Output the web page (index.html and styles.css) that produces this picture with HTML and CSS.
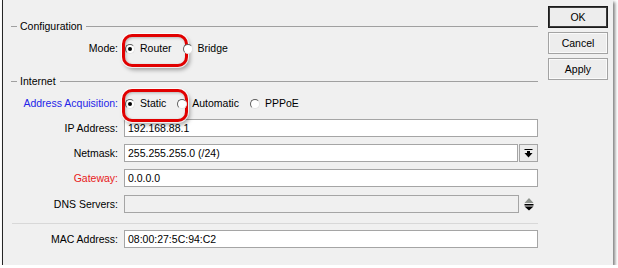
FILE: index.html
```html
<!DOCTYPE html>
<html lang="en">
<head>
  <meta charset="UTF-8" />
  <title>Quick Set</title>
  <link rel="stylesheet" href="styles.css">
</head>
<body>

  <div class="window">
    <!-- FORM -->
    <div class="form">
      <div class="group-title">Configuration</div>
      <div class="row row-mode">
        <span class="label">Mode:</span>
        <div class="options">
          <span class="option marked"><i class="radio on"></i>Router</span>
          <span class="option"><i class="radio"></i>Bridge</span>
        </div>
      </div>

      <div class="group-title group-internet">Internet</div>
      <div class="row row-acq">
        <span class="label blue">Address Acquisition:</span>
        <div class="options">
          <span class="option marked"><i class="radio on"></i>Static</span>
          <span class="option"><i class="radio"></i>Automatic</span>
          <span class="option"><i class="radio"></i>PPPoE</span>
        </div>
      </div>

      <div class="row row-field">
        <span class="label">IP Address:</span>
        <div class="field">192.168.88.1</div>
      </div>
      <div class="row row-field">
        <span class="label">Netmask:</span>
        <div class="field-wrap">
          <div class="field">255.255.255.0 (/24)</div>
          <div class="drop-btn">
            <svg width="9" height="9" viewBox="0 0 9 9"><rect x="0.5" y="0" width="8" height="1"/><rect x="3" y="2" width="3" height="2"/><path d="M0.5 4H8.5L4.5 8.5z"/></svg>
          </div>
        </div>
      </div>
      <div class="row row-field">
        <span class="label red">Gateway:</span>
        <div class="field">0.0.0.0</div>
      </div>
      <div class="row row-field row-dns">
        <span class="label">DNS Servers:</span>
        <div class="field-wrap">
          <div class="field disabled"></div>
          <div class="spin">
            <svg width="10" height="13" viewBox="0 0 10 13"><path fill="#8c918c" d="M5 0L9.5 5H0.5z"/><rect x="0.5" y="6" width="9" height="1.5"/><path d="M0.5 8.5H9.5L5 12.5z"/></svg>
          </div>
        </div>
      </div>

      <div class="separator"></div>

      <div class="row row-field row-mac">
        <span class="label">MAC Address:</span>
        <div class="field">08:00:27:5C:94:C2</div>
      </div>
    </div>

    <!-- BUTTONS -->
    <div class="actions">
      <button class="btn btn-default">OK</button>
      <button class="btn">Cancel</button>
      <button class="btn">Apply</button>
    </div>
  </div>

</body>
</html>
```

FILE: styles.css
```css
* {
  box-sizing: border-box;
}
body {
  margin: 0;
  padding: 0;
  background: #fff;
  font-family: 'Liberation Sans', Arial, sans-serif;
  font-size: 10.5px;
  color: #000;
}

.window {
  display: flex;
  width: 611px;
  height: 265px;
  margin-left: 2px;
  background: #f0f0f0;
  border-left: 1px solid #262626;
  box-shadow: 2px 2px 3px rgba(0,0,0,0.5);
}

.form {
  width: 535px;
  padding-top: 20px;
}

/* group headers */
.group-title {
  display: flex;
  align-items: center;
  height: 13px;
  line-height: 13px;
}
.group-title::before {
  content: "";
  width: 6px;
  height: 1px;
  background: #a0a0a0;
  margin: 0 3px 0 8px;
}
.group-title::after {
  content: "";
  flex: 1;
  height: 1px;
  background: #a0a0a0;
  margin-left: 4px;
}
.group-internet {
  margin-top: 18px;
}

/* rows */
.row {
  display: grid;
  grid-template-columns: 115px 1fr;
  column-gap: 6px;
  align-items: center;
  height: 18px;
}
.row-mode { margin-top: 6px; }
.row-acq { margin-top: 6px; }
.row-field { margin-top: 7px; }
.row-dns { margin-top: 8px; }
.row-mac { margin-top: 6px; }

.label {
  text-align: right;
  white-space: nowrap;
}
.blue { color: #2424e8; }
.red { color: #e82020; }

/* radio options */
.options {
  display: flex;
  align-items: center;
  padding-left: 1px;
}
.option {
  display: inline-flex;
  align-items: center;
  height: 18px;
  margin-right: 11px;
  position: relative;
}
.radio {
  width: 10px;
  height: 10px;
  margin: 2px 5px 0 0;
  border-radius: 50%;
  border: 1px solid;
  border-color: #5e5e5e #e2e2e2 #e2e2e2 #5e5e5e;
  background: #fff;
  position: relative;
}
.radio.on::after {
  content: "";
  position: absolute;
  left: 2px;
  top: 2px;
  width: 4px;
  height: 4px;
  border-radius: 50%;
  background: #000;
}

/* red highlight drawn over the option */
.marked::after {
  content: "";
  position: absolute;
  left: -3px;
  top: -5px;
  width: 60px;
  height: 27px;
  border: 3px solid #e10000;
  border-radius: 10px;
  box-shadow: 0 0 0 1px rgba(255,255,255,0.8), 2px 3px 4px rgba(0,0,0,0.35), inset 1px 1px 3px rgba(0,0,0,0.25);
}

/* fields */
.field {
  height: 18px;
  line-height: 16px;
  padding: 0 3px;
  border: 1px solid #a5a5a5;
  background: #fff;
  white-space: nowrap;
}
.field.disabled {
  background: #f0f0f0;
}
.field-wrap {
  display: flex;
  align-items: center;
}
.field-wrap .field {
  flex: 1;
}
.drop-btn {
  width: 19px;
  height: 18px;
  margin-left: 1px;
  border: 1px solid #a5a5a5;
  background: #ececec;
  display: flex;
  justify-content: center;
  align-items: center;
}
.spin {
  width: 19px;
  height: 18px;
  display: flex;
  justify-content: center;
  align-items: center;
}

.separator {
  height: 1px;
  margin: 10px 0 0 9px;
  background: #d8d8d8;
}

/* buttons */
.actions {
  display: flex;
  flex-direction: column;
  gap: 4px;
  padding-top: 6px;
  margin-left: 10px;
}
.btn {
  width: 60px;
  height: 22px;
  padding: 0;
  font-family: inherit;
  font-size: 10.5px;
  color: #000;
  background: #ededed;
  border: 1px solid #a3a3a3;
  box-shadow: inset 0 0 0 1px #fafafa;
}
.btn-default {
  border-color: #1c1c1c;
  box-shadow: inset 0 0 0 1px #3a3a3a;
}
```
